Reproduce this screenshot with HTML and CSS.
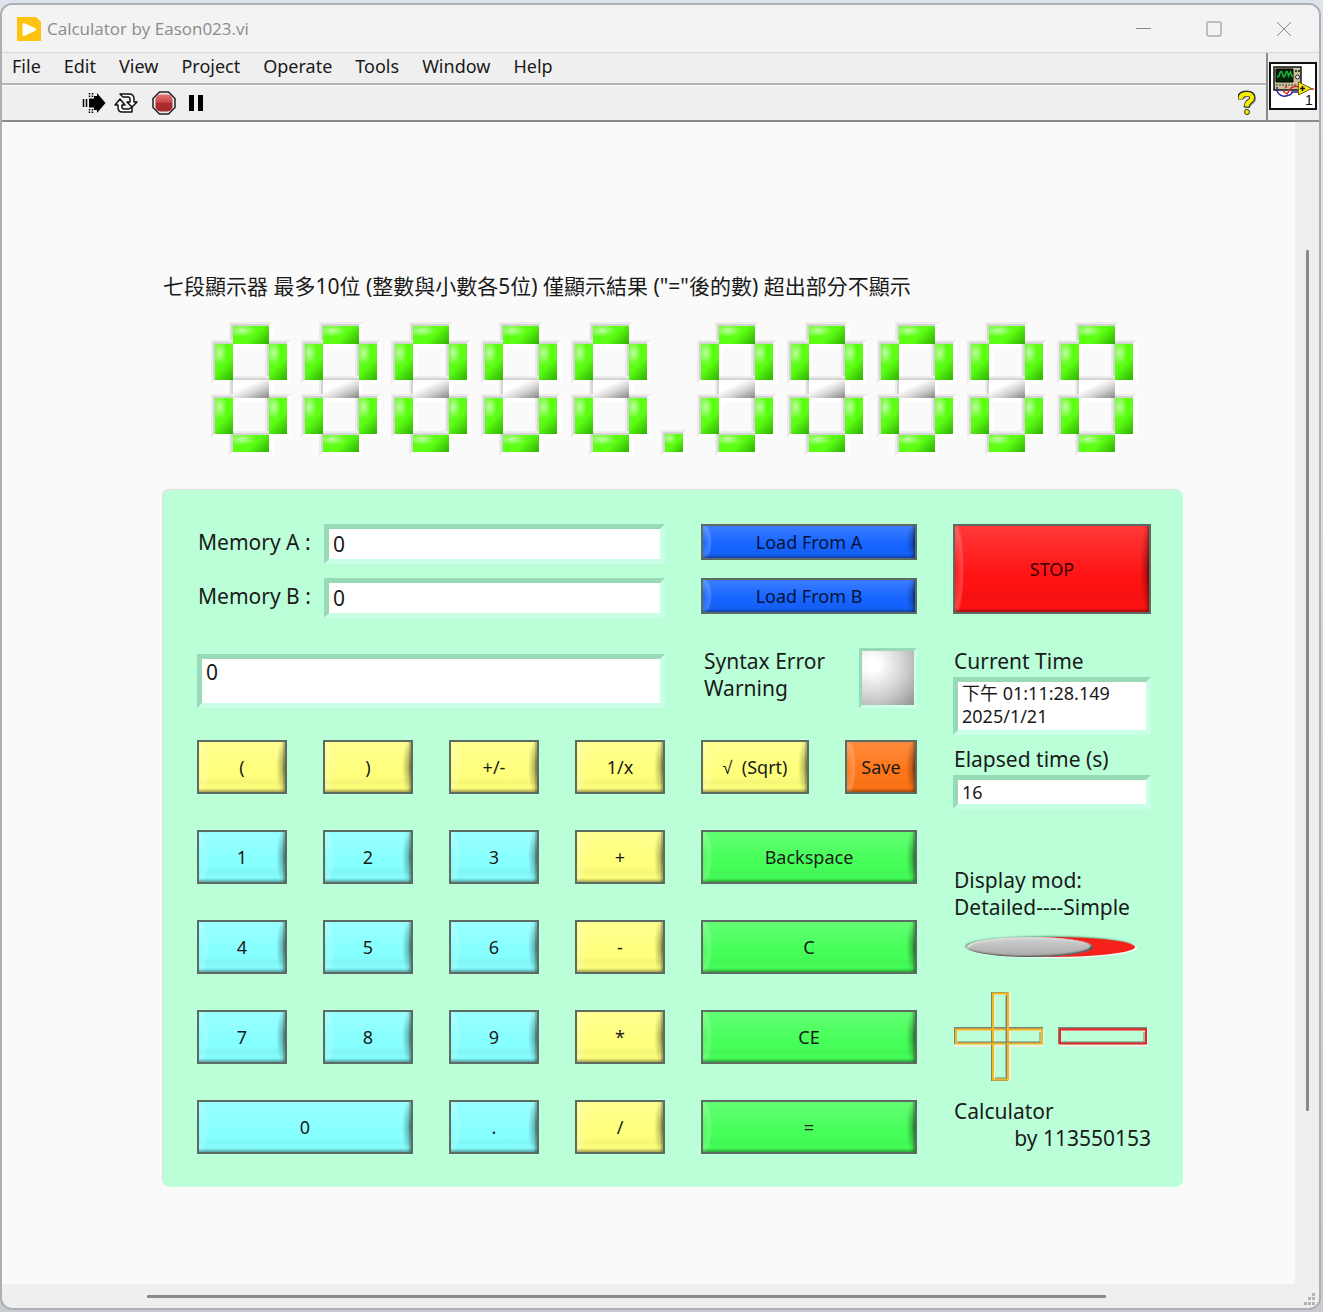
FILE: index.html
```html
<!DOCTYPE html>
<html lang="zh-Hant">
<head>
<meta charset="utf-8">
<meta name="viewport" content="width=device-width, initial-scale=1">
<title>Calculator by Eason023.vi</title>
<link rel="stylesheet" href="styles.css">
</head>
<body>
<div class="window">
  <header class="titlebar">
    <svg class="app-icon" viewBox="0 0 24 24" aria-hidden="true"><path d="M0 0h19l5 5v19H0z" fill="#ffc20e"/><path d="M7 7.500v10L17.500 12.500z" fill="#fff" stroke="#fff" stroke-width="3" stroke-linejoin="round"/></svg>
    <h1 class="title">Calculator by Eason023.vi</h1>
    <div class="window-controls">
      <button class="win-btn" aria-label="Minimize"><svg viewBox="0 0 16 16"><path d="M0 7.500h15"/></svg></button>
      <button class="win-btn" aria-label="Maximize"><svg viewBox="0 0 16 16"><rect x="1" y="1" width="14" height="14" rx="1"/></svg></button>
      <button class="win-btn" aria-label="Close"><svg viewBox="0 0 16 16"><path d="M1 1l14 14M15 1L1 15"/></svg></button>
    </div>
  </header>

  <div class="bars">
    <div class="bars-main">
      <nav class="menubar">
        <a href="#file">File</a><a href="#edit">Edit</a><a href="#view">View</a><a href="#project">Project</a><a href="#operate">Operate</a><a href="#tools">Tools</a><a href="#window">Window</a><a href="#help">Help</a>
      </nav>
      <div class="toolbar">
        <button class="tool" aria-label="Run"><svg width="24" height="24" viewBox="0 0 24 24"><path d="M12 5h3V2l8.500 10L15 22v-3h-3z"/><path d="M1.500 8v8M4.500 8v8" stroke="#000" stroke-width="1.500"/><path d="M7 7.500h5v9H7z"/><path d="M7.500 2v4M10.500 2v4M7.500 18v4M10.500 18v4" stroke="#000" stroke-width="1.500" stroke-dasharray="1.500 1"/></svg></button>
        <button class="tool" aria-label="Run continuously"><svg width="24" height="24" viewBox="0 0 24 24" fill="#fff" stroke="#111" stroke-width="1.500" stroke-linejoin="round"><path d="M6 3h9q5 0 5 5v3h3l-5 5-5-5h3V8q0-2-2-2h-5z"/><path d="M17 21H8q-4 0-4-5v-2H1l5-6 5 6H8v2q0 2 2 2h5l3-2v5z"/></svg></button>
        <button class="tool tool-abort" aria-label="Abort"><svg width="24" height="24" viewBox="0 0 24 24"><defs><linearGradient id="abort" x1="0" y1="0" x2="0" y2="1"><stop offset="0" stop-color="#e07474"/><stop offset=".45" stop-color="#c94b4b"/><stop offset=".5" stop-color="#ad2a2e"/><stop offset="1" stop-color="#a82a2c"/></linearGradient></defs><path d="M7.500 1h9L23 7.500v9L16.500 23h-9L1 16.500v-9z" fill="#e8e8e8" stroke="#222" stroke-width="1.500"/><rect x="3.500" y="3.500" width="17" height="17" rx="5" fill="url(#abort)"/></svg></button>
        <button class="tool tool-pause" aria-label="Pause"><svg width="16" height="24" viewBox="0 0 16 24"><path d="M1 4h5v16H1zM10 4h5v16h-5z"/></svg></button>
        <button class="tool tool-help" aria-label="Context help"><svg width="18" height="26" viewBox="0 0 18 26" fill="none"><path d="M4 9q0-5 5.500-5T15 8.500q0 2-3 4T9.500 18" stroke="#8a8a8a" stroke-width="6"/><path d="M2 9.500Q2 3.500 8.500 3.500T14 8q0 2-2.500 3.500T8.500 17.500" stroke="#333" stroke-width="6"/><path d="M2.500 9Q2.500 4 8.500 4T14 8q0 2-2.500 3.500T8.500 16.500" stroke="#f8f000" stroke-width="4"/><circle cx="9" cy="22" r="2.500" fill="#f8f000" stroke="#333"/></svg></button>
      </div>
    </div>
    <div class="vi-slot">
      <svg class="vi-icon" viewBox="0 0 48 48" role="img" aria-label="VI icon">
        <rect x="1" y="1" width="46" height="46" fill="#fff" stroke="#111" stroke-width="2"/>
        <path d="M5 5h27v23H5z" fill="#c7c09a" stroke="#111" stroke-width="1.500"/>
        <path d="M7 7h17v13H7z" fill="#04240a" stroke="#000"/>
        <path d="M8 15l2-1q2-8 3.500-2t3 0 3 2l2-4 2 5" fill="none" stroke="#1fb43a" stroke-width="1.500"/>
        <path d="M26 8h2v2h-2zM29 8h2v2h-2z" fill="#333"/><circle cx="28.500" cy="15" r="2" fill="#eee" stroke="#222"/>
        <path d="M7 23h20" stroke="#444" stroke-dasharray="2 1"/>
        <path d="M8 25v4q3 6 9 5t6-4h6" fill="none" stroke="#22229a" stroke-width="1.500"/>
        <path d="M14 29l4 3 4-6q4-3 8-1M16 26l2-2M38 27h7" fill="none" stroke="#e2262a" stroke-width="1.500"/>
        <path d="M29.500 20v13l13-6.500z" fill="#f5e51b" stroke="#6b6400"/><path d="M31 26.500h5M33.500 24v5" stroke="#111" stroke-width="1.500"/>
        <text x="36" y="43" class="vi-number">1</text>
      </svg>
    </div>
  </div>

  <div class="workspace">
    <main class="canvas">
      <p class="caption">七段顯示器 最多10位 (整數與小數各5位) 僅顯示結果 ("="後的數) 超出部分不顯示</p>
      <div class="display" role="img" aria-label="00000.00000">
        <div class="digit"><i class="a"></i><i class="f"></i><i class="b"></i><i class="g"></i><i class="e"></i><i class="c"></i><i class="d"></i></div>
        <div class="digit"><i class="a"></i><i class="f"></i><i class="b"></i><i class="g"></i><i class="e"></i><i class="c"></i><i class="d"></i></div>
        <div class="digit"><i class="a"></i><i class="f"></i><i class="b"></i><i class="g"></i><i class="e"></i><i class="c"></i><i class="d"></i></div>
        <div class="digit"><i class="a"></i><i class="f"></i><i class="b"></i><i class="g"></i><i class="e"></i><i class="c"></i><i class="d"></i></div>
        <div class="digit"><i class="a"></i><i class="f"></i><i class="b"></i><i class="g"></i><i class="e"></i><i class="c"></i><i class="d"></i></div>
        <div class="point"><i></i></div>
        <div class="digit"><i class="a"></i><i class="f"></i><i class="b"></i><i class="g"></i><i class="e"></i><i class="c"></i><i class="d"></i></div>
        <div class="digit"><i class="a"></i><i class="f"></i><i class="b"></i><i class="g"></i><i class="e"></i><i class="c"></i><i class="d"></i></div>
        <div class="digit"><i class="a"></i><i class="f"></i><i class="b"></i><i class="g"></i><i class="e"></i><i class="c"></i><i class="d"></i></div>
        <div class="digit"><i class="a"></i><i class="f"></i><i class="b"></i><i class="g"></i><i class="e"></i><i class="c"></i><i class="d"></i></div>
        <div class="digit"><i class="a"></i><i class="f"></i><i class="b"></i><i class="g"></i><i class="e"></i><i class="c"></i><i class="d"></i></div>
      </div>

      <section class="panel">
        <div class="calc">
          <div class="calc-row">
            <div class="memory"><label for="mem-a">Memory A :</label><input class="field" id="mem-a" value="0" readonly></div>
            <button class="key blue">Load From A</button>
          </div>
          <div class="calc-row">
            <div class="memory"><label for="mem-b">Memory B :</label><input class="field" id="mem-b" value="0" readonly></div>
            <button class="key blue">Load From B</button>
          </div>
          <div class="calc-row entry-row">
            <textarea class="field entry" aria-label="Expression" rows="1">0</textarea>
            <div class="warning"><span>Syntax Error<br>Warning</span><span class="led"></span></div>
          </div>
          <div class="keypad">
            <button class="key yellow">(</button><button class="key yellow">)</button><button class="key yellow">+/-</button><button class="key yellow">1/x</button>
            <div class="split"><button class="key yellow"><span class="root">√</span>&nbsp; (Sqrt)</button><button class="key orange">Save</button></div>
            <button class="key cyan">1</button><button class="key cyan">2</button><button class="key cyan">3</button><button class="key yellow">+</button><button class="key green">Backspace</button>
            <button class="key cyan">4</button><button class="key cyan">5</button><button class="key cyan">6</button><button class="key yellow">-</button><button class="key green">C</button>
            <button class="key cyan">7</button><button class="key cyan">8</button><button class="key cyan">9</button><button class="key yellow">*</button><button class="key green">CE</button>
            <button class="key cyan wide">0</button><button class="key cyan">.</button><button class="key yellow">/</button><button class="key green">=</button>
          </div>
        </div>

        <aside class="side">
          <button class="key red stop">STOP</button>
          <div class="readout">
            <label for="time">Current Time</label>
            <textarea class="field small" id="time" rows="2" readonly>下午 01:11:28.149
2025/1/21</textarea>
          </div>
          <div class="readout">
            <label for="elapsed">Elapsed time (s)</label>
            <input class="field small" id="elapsed" value="16" readonly>
          </div>
          <div class="mode">
            <label for="mode">Display mod:<br>Detailed----Simple</label>
            <input class="toggle" id="mode" type="checkbox" role="switch">
          </div>
          <svg class="signs" viewBox="0 0 198 90" fill="none" aria-hidden="true">
            <path d="M3 39h87v16H3zM41 3h16v87H41zM107 39h87v16h-87z" stroke="#e9f2e4" stroke-width="2"/>
            <path d="M2 37h87v15H2zM39 2h15v87H39zM106 37h87v15h-87z" stroke="#7c8378" stroke-width="2"/>
            <path d="M3 38.500h86v14H3zM40 2.500h15v86H40z" stroke="#f4b71c" stroke-width="2"/>
            <path d="M107 38.500h86v14h-86z" stroke="#ea2323" stroke-width="2"/>
            <path d="M5 51h82V41M42 87h11V5M109 51h82V41" stroke="#7c8378"/>
          </svg>
          <p class="credit">Calculator<span>by 113550153</span></p>
        </aside>
      </section>
    </main>
    <div class="track vertical"><span class="thumb"></span></div>
    <div class="track horizontal"><span class="thumb"></span></div>
    <svg class="grip" viewBox="0 0 14 14" aria-hidden="true"><path d="M9 1h3v3H9zM5 5h3v3H5zM9 5h3v3H9zM1 10h3v3H1zM5 10h3v3H5zM9 10h3v3H9z"/></svg>
  </div>
</div>
</body>
</html>
```
FILE: styles.css
```css
* { box-sizing: border-box; }

body {
  margin: 0;
  min-height: 100vh;
  padding: 3px 2px 2px 0;
  display: flex;
  background: linear-gradient(#dfe4ec, #c8cbd1);
  color: #1a1a1a;
  font-family: "Noto Sans", "Noto Sans CJK TC", sans-serif;
  font-size: 18px;
}

button, input, textarea { font: inherit; color: inherit; margin: 0; }
button { border: 0; padding: 0; background: none; }
h1, p { margin: 0; }

.window {
  flex: 1;
  min-width: 0;
  display: flex;
  flex-direction: column;
  border: 2px solid #adafb4;
  border-radius: 12px;
  background: #efefef;
  overflow: hidden;
}

/* Title bar */
.titlebar {
  display: flex;
  align-items: center;
  height: 48px;
  padding-left: 15px;
  background: #f3f3f3;
  border-bottom: 1px solid #d6d6d6;
}
.app-icon { width: 24px; height: 24px; }
.title {
  flex: 1;
  padding-left: 6px;
  font-family: "Open Sans", sans-serif;
  font-size: 17px;
  font-weight: 400;
  color: #8b8b8b;
}
.window-controls { display: flex; }
.win-btn { width: 70px; height: 47px; display: grid; place-items: center; }
.win-btn svg { width: 16px; height: 16px; fill: none; stroke: #8a8a8a; }

/* Menu and tool bars */
.bars { display: flex; border-bottom: 2px solid #8b8b8b; }
.bars-main { flex: 1; }
.menubar {
  display: flex;
  gap: 23px;
  height: 32px;
  padding-left: 10px;
  line-height: 26px;
  border-bottom: 2px solid #b4b4b4;
}
.menubar a { color: #1a1a1a; text-decoration: none; }
.toolbar {
  display: flex;
  align-items: center;
  height: 35px;
  padding: 0 10px 0 80px;
  border-top: 1px solid #fff;
}
.tool { display: grid; }
.tool + .tool { margin-left: 8px; }
.toolbar .tool-abort { margin-left: 14px; }
.toolbar .tool-pause { margin-left: 12px; }
.toolbar .tool-help { margin-left: auto; }
.vi-slot { width: 53px; padding: 9px 1px 0; border-left: 2px solid #8b8b8b; }
.vi-icon { display: block; width: 48px; height: 48px; }
.vi-number { font-family: "Liberation Sans", sans-serif; font-size: 14px; fill: #111; }

/* Scrolling front panel */
.workspace {
  flex: 1;
  display: grid;
  grid-template-columns: minmax(0, 1fr) 24px;
  grid-template-rows: 1fr 24px;
}
.canvas { padding: 151px 112px 97px 161px; background: #fafafa; border-radius: 0 0 3px 0; }
.track { display: flex; justify-content: center; }
.vertical { padding: 128px 0 173px; }
.vertical .thumb { width: 3px; background: #8a8a8a; border-radius: 1px; }
.horizontal { align-items: center; padding: 0 189px 0 145px; }
.horizontal .thumb { flex: 1; height: 3px; background: #8a8a8a; border-radius: 1px; }
.grip { width: 14px; height: 14px; align-self: end; fill: #b3b3b3; margin: 0 0 2px 8px; }

.caption { font-size: 21px; line-height: 27px; }

/* Seven-segment display */
.display {
  display: flex;
  gap: 18px;
  margin-top: 26px;
  padding-left: 52px;
  isolation: isolate;
}
.digit {
  display: grid;
  grid-template-columns: 18px 36px 18px;
  grid-template-rows: 18px 36px 18px 36px 18px;
}
.point { display: grid; width: 18px; grid-template-rows: 18px; align-content: end; }
.display i {
  position: relative;
  background:
    radial-gradient(ellipse 40% 35% at 25% 25%, rgba(255, 255, 255, .6), transparent),
    linear-gradient(135deg, #5cff14 55%, #2fb000);
}
.display i::before {
  content: "";
  position: absolute;
  inset: -4px;
  z-index: -1;
  border: 4px solid;
  border-color: #ececec #fff #fff #ececec;
}
.display i::after {
  content: "";
  position: absolute;
  inset: -2px 0 0 -2px;
  z-index: -1;
  background: #d4d4d4;
}
.a, .g, .d { grid-column: 2; }
.f, .e { grid-column: 1; }
.b, .c { grid-column: 3; }
.a { grid-row: 1; }
.f, .b { grid-row: 2; }
.g { grid-row: 3; }
.e, .c { grid-row: 4; }
.d { grid-row: 5; margin-top: 1px; }
.display .g { background: linear-gradient(155deg, #fff 35%, #d0d0d0 65%, #858585); }

/* Calculator panel */
.panel {
  display: flex;
  gap: 36px;
  margin-top: 38px;
  padding: 34px 32px 33px 34px;
  border-radius: 7px;
  background: #bbffd9;
  box-shadow: -1px -1px 1px #ddd, 1px 1px 1px #fff;
  font-size: 21px;
  line-height: 27px;
}
.calc { flex: 1; min-width: 0; display: flex; flex-direction: column; }
.calc-row {
  display: grid;
  grid-template-columns: minmax(0, 1fr) 216px;
  gap: 36px;
  margin-bottom: 14px;
}
.calc-row .key { height: 36px; }
.memory { display: flex; align-items: center; justify-content: space-between; gap: 10px; }
.memory label { padding: 0 0 3px 1px; }
.memory .field { width: 341px; height: 40px; }
.field {
  display: block;
  border: 5px solid;
  border-color: #98dab5 #c8ffe6 #c8ffe6 #98dab5;
  border-radius: 0;
  padding: 0 4px;
  background: #fff;
  outline: 0;
  resize: none;
  overflow: hidden;
}
.entry-row { margin: 16px 0 34px; height: 58px; }
.entry { width: 100%; height: 54px; align-self: end; }
.warning { display: flex; justify-content: space-between; padding-left: 3px; }
.led {
  width: 58px;
  height: 60px;
  align-self: center;
  border: 3px solid;
  border-color: #98dab5 #c8ffe6 #c8ffe6 #98dab5;
  background: radial-gradient(circle at 20% 25%, #fff 12%, #ccc 60%, #7c7c7c 115%);
}

.key {
  border: 2px solid #5d6b63;
  font-size: 18px;
  line-height: 24px;
  text-align: center;
  white-space: nowrap;
  background:
    radial-gradient(ellipse 9px 60% at right center, rgba(0, 0, 0, .4), rgba(0, 0, 0, .2) 50%, transparent),
    radial-gradient(ellipse 9px 60% at left center, transparent, rgba(255, 255, 255, .2) 80%, transparent),
    linear-gradient(transparent 70%, rgba(0, 0, 0, .04) 80%, transparent 92%),
    linear-gradient(rgba(255, 255, 255, .16), transparent 60%),
    var(--face);
  box-shadow: inset 0 -4px 3px -2px rgba(0, 0, 0, .35), inset -2px 0 1px rgba(0, 0, 0, .2);
}
.yellow { --face: #ffff7c; }
.cyan { --face: #86ffff; }
.green { --face: #45ff58; }
.orange { --face: #ff7518; }
.blue { --face: #1564ff; color: #061238; }
.red { --face: #ff1212; color: #3c0000; }
.root { font-family: "Liberation Sans", sans-serif; }

.keypad {
  display: grid;
  grid-template-columns: 90fr 90fr 90fr 90fr 216fr;
  grid-auto-rows: 54px;
  gap: 36px;
}
.split { display: grid; grid-template-columns: 3fr 2fr; gap: 36px; }
.wide { grid-column: span 2; }

.side { width: 198px; display: flex; flex-direction: column; }
.stop { height: 90px; margin-bottom: 34px; }
.readout { display: grid; gap: 2px; margin-bottom: 11px; }
.side label { padding-left: 1px; }
.small { width: 100%; font-size: 18px; line-height: 23px; height: 34px; }
textarea.small { height: 58px; }
.mode { display: grid; gap: 16px; margin: 47px 0 34px; }
.toggle {
  appearance: none;
  display: flex;
  width: 168px;
  height: 20px;
  margin-left: 14px;
  border-radius: 50%;
  background: #f8201a;
  box-shadow: -2px -1px 2px #68a583, 2px 1px 1px #fff;
}
.toggle::before {
  content: "";
  width: 126px;
  border-radius: 50%;
  background: linear-gradient(#d2d2d2, #a9a9a9);
  box-shadow: inset -2px -1px 2px #444, inset 1px 1px 2px #eee;
}
.signs { display: block; width: 100%; height: 90px; }
.credit { margin-top: 17px; padding-left: 1px; }
.credit span { display: block; text-align: right; }
```
